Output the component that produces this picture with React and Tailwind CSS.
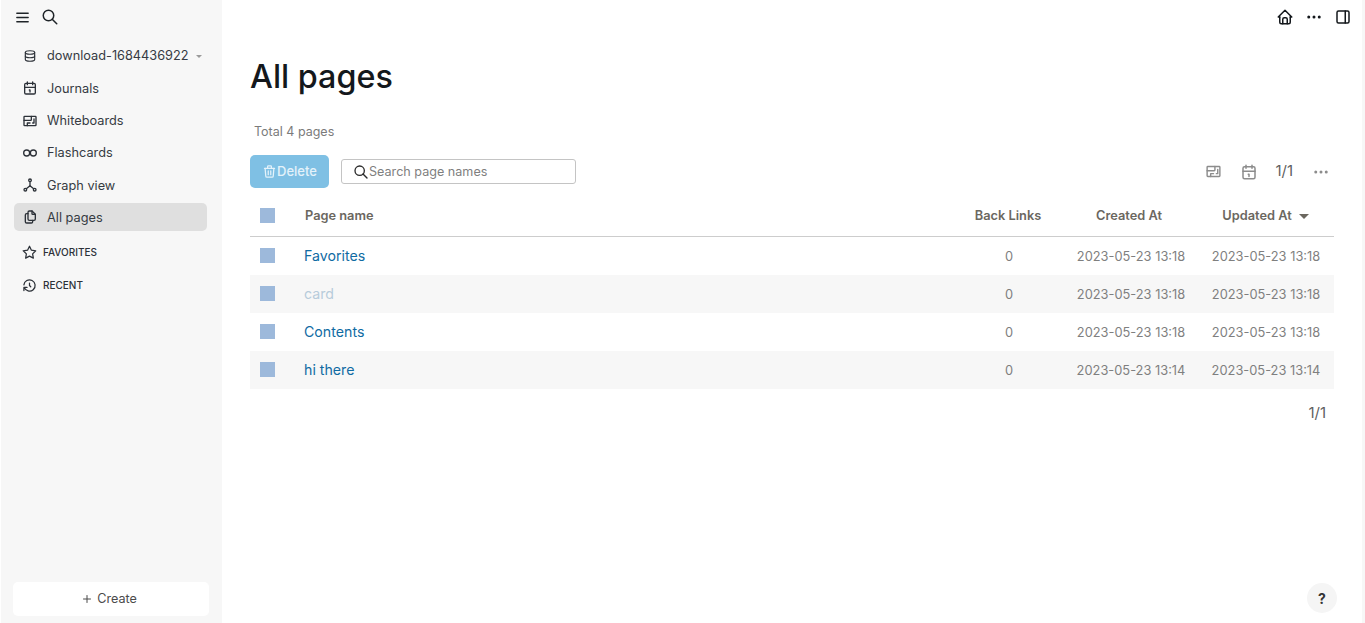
import React from "react";
import {
  TbMenu2,
  TbSearch,
  TbDatabase,
  TbHierarchy,
  TbFiles,
  TbStar,
  TbHistory,
  TbHome,
  TbDots,
  TbLayoutSidebarRight,
  TbTrash,
  TbPlus,
} from "react-icons/tb";

const font = { fontFamily: "Inter, sans-serif" };

function CalendarIcon({ className }) {
  return (
    <svg viewBox="0 0 24 24" fill="none" stroke="currentColor" strokeWidth="2" strokeLinecap="round" strokeLinejoin="round" className={className}>
      <rect x="4" y="5" width="16" height="16" rx="2" />
      <path d="M16 3v4M8 3v4M4 11h16M11 15h1v3" />
    </svg>
  );
}

function WhiteboardIcon({ className }) {
  return (
    <svg viewBox="0 0 24 24" fill="none" stroke="currentColor" strokeWidth="2" strokeLinecap="round" strokeLinejoin="round" className={className}>
      <path d="M4 5h16a1 1 0 0 1 1 1v12a1 1 0 0 1-1 1H4a1 1 0 0 1-1-1V6a1 1 0 0 1 1-1z" />
      <path d="M14 5v5a1 1 0 0 1-1 1H3M8 19v-4h4M16 15h2V9" />
    </svg>
  );
}

function FlashcardIcon({ className }) {
  return (
    <svg viewBox="0 0 24 24" fill="none" stroke="currentColor" strokeWidth="2" className={className}>
      <circle cx="7" cy="12" r="4.5" />
      <circle cx="17" cy="12" r="4.5" />
    </svg>
  );
}

function NavItem({ icon: Icon, label, active }) {
  return (
    <div className={`flex h-[28px] items-center rounded-[5px] pl-[8px] text-[12.75px] text-[#363b43] ${active ? "bg-[#dfdfdf]" : ""}`}>
      <Icon className="h-[16px] w-[16px] shrink-0 text-[#2c3138]" />
      <span className="ml-[9px]">{label}</span>
    </div>
  );
}

function SectionItem({ icon: Icon, label }) {
  return (
    <div className="flex h-[17px] items-center pl-[8px] text-[10px] font-medium text-[#2c3138]">
      <Icon className="h-[15px] w-[15px] shrink-0" />
      <span className="ml-[6px]">{label}</span>
    </div>
  );
}

function Checkbox() {
  return <div className="h-[15px] w-[15px] bg-[#9db9db]" />;
}

const rows = [
  { name: "Favorites", created: "2023-05-23 13:18", updated: "2023-05-23 13:18" },
  { name: "card", created: "2023-05-23 13:18", updated: "2023-05-23 13:18", faded: true, striped: true },
  { name: "Contents", created: "2023-05-23 13:18", updated: "2023-05-23 13:18" },
  { name: "hi there", created: "2023-05-23 13:14", updated: "2023-05-23 13:14", striped: true },
];

export default function App() {
  return (
    <div className="flex h-[623px] w-[1365px] overflow-hidden bg-white" style={font}>
      <aside className="ml-px flex w-[221px] shrink-0 flex-col bg-[#f7f7f7]">
        <div className="flex h-[34px] items-center pl-[13px] text-[#1f2428]">
          <TbMenu2 className="h-[17px] w-[17px]" />
          <TbSearch className="ml-[10px] h-[18px] w-[18px]" />
        </div>
        <nav className="mt-[8px] flex flex-col gap-[4.3px] pl-[13px] pr-[15px]">
          <div className="flex h-[28px] items-center pl-[9px] text-[12.75px] whitespace-nowrap text-[#363b43]">
            <TbDatabase className="h-[14px] w-[14px] shrink-0 text-[#2c3138]" />
            <span className="ml-[10px]">download-1684436922</span>
            <span className="ml-[7px] mt-px h-0 w-0 border-x-[3px] border-t-[3px] border-x-transparent border-t-[#9a9a9a]" />
          </div>
          <NavItem icon={CalendarIcon} label="Journals" />
          <NavItem icon={WhiteboardIcon} label="Whiteboards" />
          <NavItem icon={FlashcardIcon} label="Flashcards" />
          <NavItem icon={TbHierarchy} label="Graph view" />
          <NavItem icon={TbFiles} label="All pages" active />
        </nav>
        <div className="mt-[13px] flex flex-col gap-[16px] pl-[13px]">
          <SectionItem icon={TbStar} label="FAVORITES" />
          <SectionItem icon={TbHistory} label="RECENT" />
        </div>
        <div className="mt-auto mb-[7px] ml-[12px] flex h-[34px] w-[196px] items-center justify-center rounded-[5px] bg-white pr-[4px] text-[12.6px] text-[#4b4b4b]">
          <TbPlus className="mr-[4px] h-[12px] w-[12px]" />
          Create
        </div>
      </aside>

      <main className="flex min-w-0 flex-1 flex-col">
        <header className="flex h-[34px] items-center justify-end gap-[11px] pr-[10px] text-[#14181c]">
          <TbHome className="h-[18px] w-[18px]" />
          <TbDots className="h-[18px] w-[18px]" />
          <TbLayoutSidebarRight className="h-[18px] w-[18px]" />
        </header>
        <div className="relative flex-1 pl-[28px] pr-[28px]">
          <h1 className="mt-[21px] text-[32.3px] leading-[44px] font-medium text-[#14181c]">All pages</h1>
          <p className="mt-[24px] pl-[4px] text-[12.5px] leading-[18px] text-[#7b7b7b]">Total 4 pages</p>

          <div className="mt-[14px] flex h-[33px] items-center">
            <button className="flex h-[33px] w-[79px] items-center justify-center rounded-[5px] bg-[#7fc0e4] text-[13px] font-medium text-[#e4f2fa]">
              <TbTrash className="h-[15px] w-[15px]" />
              Delete
            </button>
            <div className="ml-[12px] flex h-[25px] w-[235px] items-center rounded-[3px] border border-[#c4c4c4] pl-[11px] text-[12.6px] text-[#7f7f7f]">
              <TbSearch className="h-[16px] w-[16px] shrink-0 text-[#2a2a2a]" />
              <span className="pt-px">Search page names</span>
            </div>
            <div className="ml-auto flex items-center pr-[4px] text-[#8c8c8c]">
              <WhiteboardIcon className="h-[17px] w-[17px]" />
              <CalendarIcon className="ml-[18px] h-[18px] w-[18px]" />
              <span className="ml-[17px] text-[15px] text-[#5f5f5f]">1/1</span>
              <TbDots className="ml-[19px] h-[18px] w-[18px]" />
            </div>
          </div>

          <div className="mt-[16px] flex h-[33px] items-center border-b border-[#cdcdcd] pb-[9px] text-[12.8px] font-semibold text-[#6b675f]">
            <div className="w-[53px] pl-[10px]"><Checkbox /></div>
            <div className="ml-[2px] flex-1">Page name</div>
            <div className="w-[112px] text-center">Back Links</div>
            <div className="w-[134px] pr-[4px] text-center">Created At</div>
            <div className="flex w-[136px] items-center justify-center pr-[1px]">
              Updated At
              <span className="ml-[7px] mt-[2px] h-0 w-0 border-x-[5px] border-t-[5px] border-x-transparent border-t-[#6b675f]" />
            </div>
          </div>

          <div>
            {rows.map((row) => (
              <div key={row.name} className={`flex h-[38px] items-center ${row.striped ? "bg-[#f7f7f7]" : ""}`}>
                <div className="w-[53px] pb-[1px] pl-[10px]"><Checkbox /></div>
                <div className={`flex-1 pl-px text-[14.2px] ${row.faded ? "text-[#b7ccdb]" : "text-[#106ba3]"}`}>{row.name}</div>
                <div className="w-[112px] pt-px pl-[2px] text-center text-[12.85px] text-[#7f7f7f]">0</div>
                <div className="w-[134px] pt-px text-center text-[12.85px] whitespace-nowrap text-[#7f7f7f]">{row.created}</div>
                <div className="w-[136px] pt-px text-center text-[12.85px] whitespace-nowrap text-[#7f7f7f]">{row.updated}</div>
              </div>
            ))}
          </div>

          <div className="mt-[15px] pr-[8px] text-right text-[15px] leading-[18px] text-[#5f5f5f]">1/1</div>

          <div className="absolute right-[25px] bottom-[10px] flex h-[30px] w-[30px] items-center justify-center rounded-full bg-[#f5f5f5] text-[14px] font-bold text-[#333]">?</div>
        </div>
      </main>
      <div className="w-[3px] shrink-0 bg-[#f7f7f7]" />
    </div>
  );
}
